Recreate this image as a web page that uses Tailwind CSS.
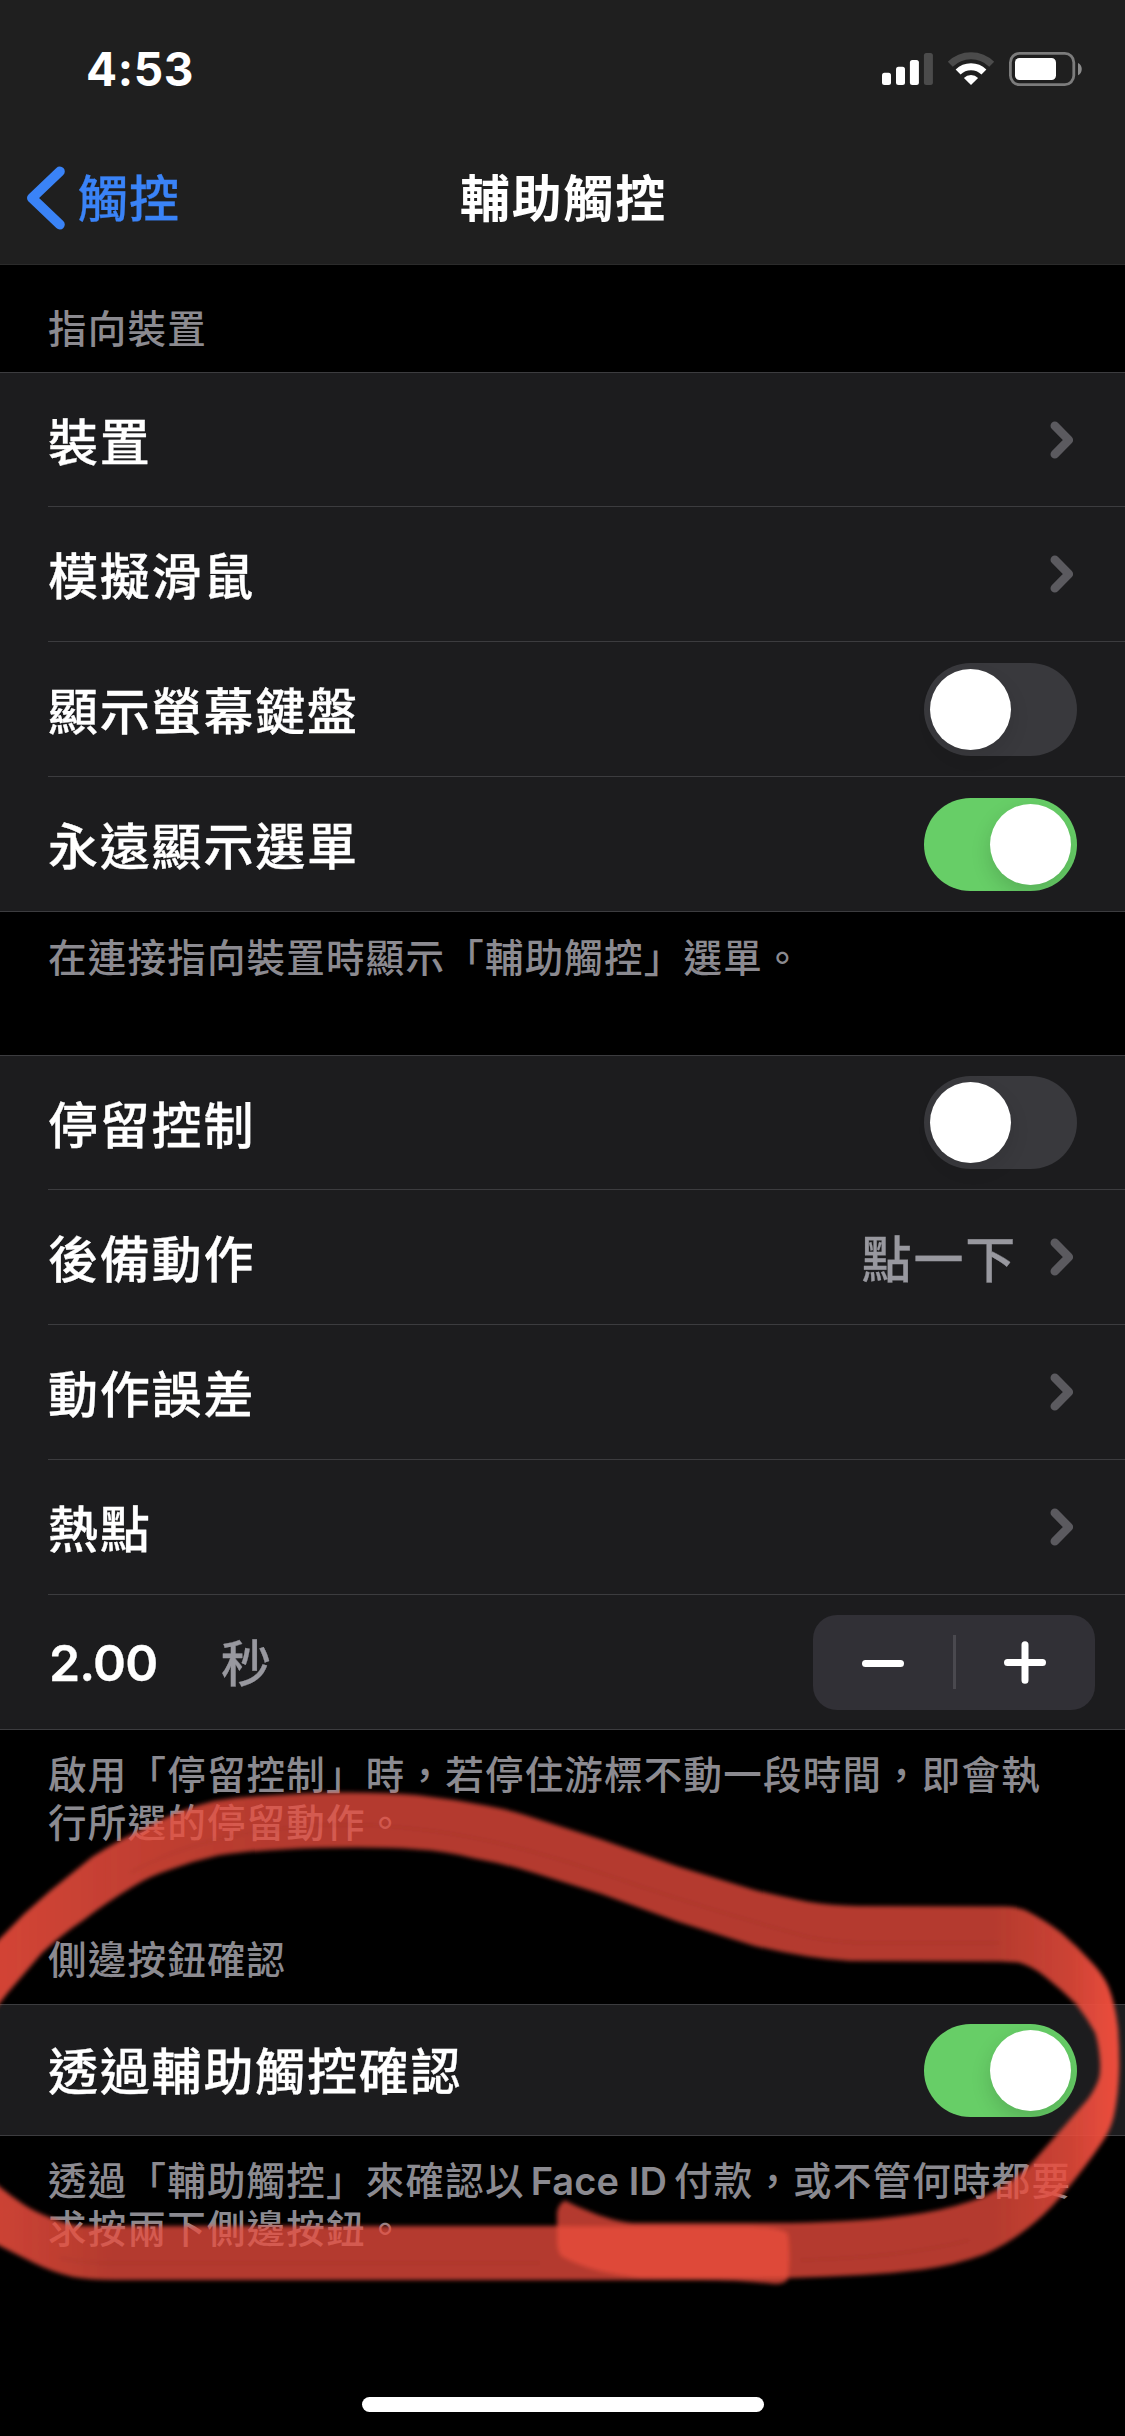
<!DOCTYPE html>
<html lang="zh-Hant-TW">
<head>
<meta charset="utf-8">
<title>輔助觸控</title>
<script src="https://cdn.jsdelivr.net/npm/@tailwindcss/browser@4"></script>
</head>
<body class="bg-black">
<svg class="hidden">
  <symbol id="chevron" viewBox="0 0 24 38"><path d="M4.8 4.8 18.8 19 4.8 33.2" fill="none" stroke="#5b5a5f" stroke-width="8.6" stroke-linecap="round" stroke-linejoin="round"/></symbol>
</svg>
<div class="relative w-[1125px] h-[2436px] overflow-hidden bg-black text-white flex flex-col font-['Inter','Noto_Sans_CJK_TC',sans-serif] font-medium text-[50px] leading-[60px] tracking-[1.8px] whitespace-nowrap [-webkit-text-stroke:0.3px]">

  <header class="h-[265px] shrink-0 bg-[#1f1f1f] border-b border-[#2b2b2b] flex flex-col">
    <div class="h-[132px] pt-[6px] pl-[86px] pr-[43px] flex items-center justify-between">
      <span class="text-[46px] font-bold tracking-[0.6px] [-webkit-text-stroke:0px]">4:53</span>
      <svg class="w-[201px] h-[34px]" viewBox="881 52 201 34">
        <g fill="#fff">
          <rect x="882" y="72.7" width="9" height="12.3" rx="2.5"/>
          <rect x="896" y="66.7" width="9" height="18.3" rx="2.5"/>
          <rect x="909.9" y="60" width="9" height="25" rx="2.5"/>
          <rect x="923.9" y="53" width="9" height="32" rx="2.5" fill="#4b4b4b"/>
          <path d="M971 85 963.9 77.9A10 10 0 0 1 978.1 77.9Z"/>
        </g>
        <path d="M958.1 72.1A18.3 18.3 0 0 1 983.9 72.1" fill="none" stroke="#fff" stroke-width="7"/>
        <path d="M950.3 64.3A29.3 29.3 0 0 1 991.7 64.3" fill="none" stroke="#4b4b4b" stroke-width="7"/>
        <rect x="1010.4" y="53.4" width="63.4" height="31.2" rx="9" fill="none" stroke="#7c7c7c" stroke-width="2.8"/>
        <rect x="1015" y="58" width="41" height="22" rx="4.5" fill="#fff"/>
        <path d="M1078 63C1083 65 1083 73 1078 75.300Z" fill="#8b8b8b"/>
      </svg>
    </div>
    <div class="grow grid grid-cols-3 items-center pb-[1px]">
      <div class="flex items-center pl-[26px] text-[#3a83f7]">
        <svg class="w-[40px] h-[66px]" viewBox="0 0 40 66"><path d="M33.800 6.500 6 33 33.800 59.500" fill="none" stroke="currentColor" stroke-width="10" stroke-linecap="round" stroke-linejoin="round"/></svg>
        <span class="ml-[12px] pt-[2px] tracking-[1px]">觸控</span>
      </div>
      <h1 class="text-center font-bold pl-[2px] pt-[2px] [-webkit-text-stroke:0px]">輔助觸控</h1>
    </div>
  </header>

  <h2 class="h-[107px] shrink-0 pl-[48px] pt-[34px] text-[38.500px] leading-[60px] tracking-[1.22px] text-[#8b8a90] [-webkit-text-stroke:0px]">指向裝置</h2>

  <section class="bg-[#1c1c1e] border-y border-[#3c3c3f] shrink-0 pl-[48px] h-[540px]">
    <div class="h-[134px] border-b border-[#3c3c3f] pr-[51px] flex items-center justify-between"><span class="pt-[6px]">裝置</span><svg class="w-[24px] h-[38px]"><use href="#chevron"/></svg></div>
    <div class="h-[135px] border-b border-[#3c3c3f] pr-[51px] flex items-center justify-between"><span class="pt-[6px]">模擬滑鼠</span><svg class="w-[24px] h-[38px]"><use href="#chevron"/></svg></div>
    <div class="h-[135px] border-b border-[#3c3c3f] pr-[48px] flex items-center justify-between"><span class="pt-[6px]">顯示螢幕鍵盤</span>
      <div class="w-[153px] h-[93px] rounded-full bg-[#39393d] p-[6px] flex justify-start"><div class="size-[81px] rounded-full bg-white shadow-[3px_8px_18px_rgba(0,0,0,0.08)]"></div></div></div>
    <div class="h-[134px] pr-[48px] flex items-center justify-between"><span class="pt-[6px]">永遠顯示選單</span>
      <div class="w-[153px] h-[93px] rounded-full bg-[#67ce67] p-[6px] flex justify-end overflow-hidden"><div class="size-[81px] rounded-full bg-white shadow-[0_8px_20px_rgba(0,0,0,0.15)]"></div></div></div>
  </section>

  <p class="h-[143px] shrink-0 pl-[48px] pt-[22px] text-[38.500px] leading-[48px] tracking-[1.22px] text-[#8b8a90] [-webkit-text-stroke:0px]">在連接指向裝置時顯示「輔助觸控」選單。</p>

  <section class="bg-[#1c1c1e] border-y border-[#3c3c3f] shrink-0 pl-[48px] h-[675px]">
    <div class="h-[134px] border-b border-[#3c3c3f] pr-[48px] flex items-center justify-between"><span class="pt-[6px]">停留控制</span>
      <div class="w-[153px] h-[93px] rounded-full bg-[#39393d] p-[6px] flex justify-start"><div class="size-[81px] rounded-full bg-white shadow-[3px_8px_18px_rgba(0,0,0,0.08)]"></div></div></div>
    <div class="h-[135px] border-b border-[#3c3c3f] pr-[51px] flex items-center"><span class="pt-[6px]">後備動作</span><span class="ml-auto mr-[33px] pt-[6px] text-[#98989f]">點一下</span><svg class="w-[24px] h-[38px]"><use href="#chevron"/></svg></div>
    <div class="h-[135px] border-b border-[#3c3c3f] pr-[51px] flex items-center justify-between"><span class="pt-[6px]">動作誤差</span><svg class="w-[24px] h-[38px]"><use href="#chevron"/></svg></div>
    <div class="h-[135px] border-b border-[#3c3c3f] pr-[51px] flex items-center justify-between"><span class="pt-[6px]">熱點</span><svg class="w-[24px] h-[38px]"><use href="#chevron"/></svg></div>
    <div class="h-[134px] pr-[30px] flex items-center">
      <span class="w-[173px] pt-[2px] pl-[1px] font-semibold tracking-[-0.8px]">2.00</span><span class="pt-[3px] text-[#98989f]">秒</span>
      <div class="ml-auto w-[282px] h-[95px] rounded-[24px] bg-[#313036] flex items-center">
        <div class="flex-1 flex justify-center"><svg class="w-[42px] h-[44px]" viewBox="0 0 42 44"><path d="M3.500 23.500H38.500" stroke="#fff" stroke-width="7" stroke-linecap="round"/></svg></div>
        <div class="w-[3px] h-[54px] bg-[#4a494f]"></div>
        <div class="flex-1 flex justify-center"><svg class="w-[42px] h-[44px]" viewBox="0 0 42 44"><path d="M3.500 22.500H38.500M21 4.700V40.300" stroke="#fff" stroke-width="7" stroke-linecap="round"/></svg></div>
      </div>
    </div>
  </section>

  <p class="h-[195px] shrink-0 pl-[48px] pt-[21px] text-[38.500px] leading-[48px] tracking-[1.22px] text-[#8b8a90] [-webkit-text-stroke:0px]">啟用「停留控制」時，若停住游標不動一段時間，即會執<br>行所選的停留動作。</p>
  <h2 class="h-[79px] shrink-0 pl-[48px] pt-[5px] text-[38.500px] leading-[60px] tracking-[1.22px] text-[#8b8a90] [-webkit-text-stroke:0px]">側邊按鈕確認</h2>

  <section class="bg-[#1c1c1e] border-y border-[#3c3c3f] shrink-0 pl-[48px] h-[132px] pr-[48px] flex items-center justify-between"><span class="pt-[4px]">透過輔助觸控確認</span>
    <div class="w-[153px] h-[93px] rounded-full bg-[#67ce67] p-[6px] flex justify-end overflow-hidden"><div class="size-[81px] rounded-full bg-white shadow-[0_8px_20px_rgba(0,0,0,0.15)]"></div></div>
  </section>

  <p class="shrink-0 pl-[48px] pt-[21px] text-[38.500px] leading-[48px] tracking-[1.22px] text-[#8b8a90] [-webkit-text-stroke:0px]">透過「輔助觸控」來確認以<span class="ml-[6px] mr-[7px] text-[38px] font-semibold tracking-[0.100px]">Face ID</span>付款，或不管何時都要<br>求按兩下側邊按鈕。</p>

  <div class="mt-auto mb-[24px] mx-auto shrink-0 w-[402px] h-[15px] rounded-full bg-white"></div>

  <!-- hand-drawn marker loop -->
  <svg class="absolute left-0 top-[1760px] w-[1125px] h-[560px]" viewBox="0 1760 1125 560">
    <defs>
      <linearGradient id="ink" gradientUnits="userSpaceOnUse" x1="0" y1="0" x2="1125" y2="0">
        <stop offset="0" stop-color="#ea4c3c" stop-opacity=".9"/>
        <stop offset=".1" stop-color="#ea4c3c" stop-opacity=".84"/>
        <stop offset=".25" stop-color="#ea4c3c" stop-opacity=".77"/>
        <stop offset=".88" stop-color="#ea4c3c" stop-opacity=".77"/>
        <stop offset=".95" stop-color="#ea4c3c" stop-opacity=".87"/>
        <stop offset=".99" stop-color="#ee4d3d" stop-opacity=".98"/>
      </linearGradient>
      <linearGradient id="tail" gradientUnits="userSpaceOnUse" x1="0" y1="0" x2="1125" y2="0">
        <stop offset="0" stop-color="#ea4c3c" stop-opacity=".87"/>
        <stop offset=".1" stop-color="#ea4c3c" stop-opacity=".77"/>
        <stop offset="1" stop-color="#ea4c3c" stop-opacity=".77"/>
      </linearGradient>
      <filter id="soft" x="-5%" y="-5%" width="110%" height="110%"><feGaussianBlur stdDeviation="2"/></filter>
    </defs>
    <g filter="url(#soft)">
      <path fill="url(#tail)" d="M-20 2170L0 2187Q11 2196 23 2204T50 2217.400Q68 2225 84 2226L555 2226L750 2226.500Q785 2228 788 2234Q791 2255 788 2279Q785 2284 775 2284Q740 2280 700 2280L115 2280Q90 2280 73 2277Q52 2272 34 2263T0 2246L-20 2234Z"/>
      <path fill="url(#ink)" d="M-20 1960L0 1938.500L24 1914L50 1891L92 1857Q120 1839 149 1826Q180 1809 214 1801Q240 1797 268 1795.500Q300 1793 337 1792.500Q385 1792 417 1795Q452 1799 486 1805.500Q506 1809 525 1815L601.500 1839.600L678 1866.500L754.600 1890Q783 1897 808 1901.700Q832 1905.500 858 1906L1005 1906.500Q1016 1906.500 1025 1910Q1045 1920 1061 1932.500Q1077 1946 1091.400 1962Q1103 1974 1108.600 1987Q1115 2003 1118 2028Q1119.500 2048 1119.300 2068Q1118.500 2095 1114 2115.400Q1111 2129 1103 2141Q1085 2168 1060.800 2196.500Q1044 2216 1026 2229.500Q1006 2245 984 2254.500Q955 2265 923 2269.500Q892 2273.500 861.800 2275Q825 2277 789 2278L700 2279L640 2278.300Q620 2276 601.500 2271.600Q576 2265 561 2256Q557.500 2251 557 2242L557 2212Q559 2203 565 2200.400Q576 2206 586 2210Q599 2216 613 2219.400Q626 2223 640 2223L793 2223Q830 2222 862 2220Q894 2217.500 923 2213Q957 2207 984 2196.500Q1010 2184 1030 2165L1053 2139L1087.600 2099.600Q1096 2088 1099 2078Q1100.500 2072 1100 2062Q1099 2045 1095 2032.400Q1087 2018 1076 2004Q1062 1990 1045.500 1977Q1034 1967 1018.700 1962.500L1000 1961.500L850 1961Q830 1960 808 1956.500Q780 1952 754.600 1946L678 1921.700L601.500 1894L536 1873.500Q506 1864 474.500 1858.400Q445 1851 417 1849.500Q385 1847 337 1847.700Q300 1848 268 1850.500Q240 1852 218 1855.600Q194 1861 172 1869Q150 1876 134 1886Q107 1902 84 1919.700Q61 1935 42 1953L7.600 1993L0 2002.700L-20 2030Z"/>
      <g fill="none" stroke="#7d2a22" stroke-opacity=".14" stroke-width="3">
        <path d="M130 1873Q190 1840 268 1830T417 1829Q500 1838 601 1873T808 1937Q840 1943 870 1943H1000"/>
        <path d="M60 2258Q80 2263 115 2263H540M800 2260Q900 2258 970 2240"/>
      </g>
    </g>
  </svg>
</div>
</body>
</html>
